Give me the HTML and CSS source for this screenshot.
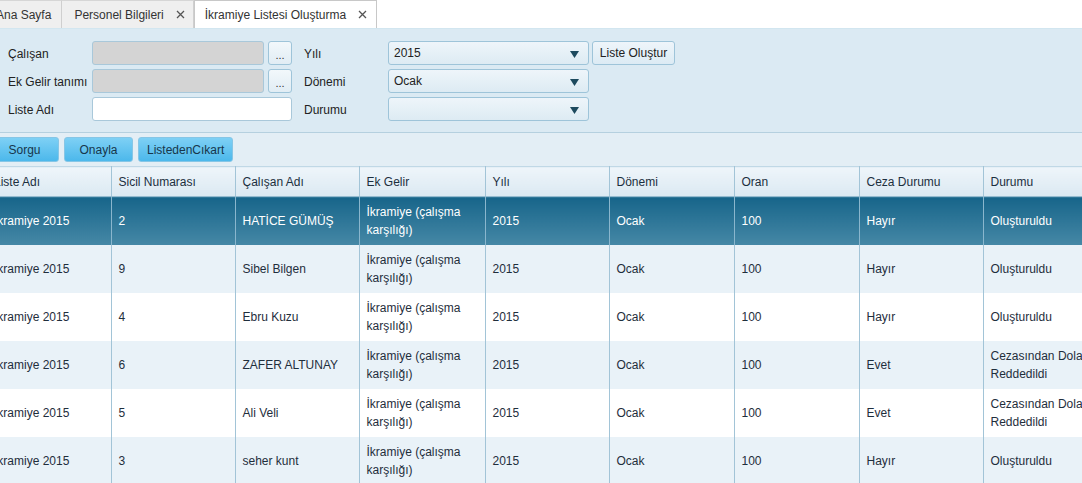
FILE: index.html
```html
<!DOCTYPE html>
<html lang="tr">
<head>
<meta charset="utf-8">
<title>İkramiye Listesi Oluşturma</title>
<link rel="stylesheet" href="styles.css">
</head>
<body>
<div class="app">
  <div class="tabbar">
    <div class="tab tab-first">Ana Sayfa</div>
    <div class="tab">Personel Bilgileri<span class="close"><svg width="9" height="9" viewBox="0 0 9 9"><path d="M1 1L8 8M8 1L1 8" stroke="#555" stroke-width="1.3"/></svg></span></div>
    <div class="tab tab-active">İkramiye Listesi Oluşturma<span class="close"><svg width="9" height="9" viewBox="0 0 9 9"><path d="M1 1L8 8M8 1L1 8" stroke="#555" stroke-width="1.3"/></svg></span></div>
  </div>

  <div class="form">
    <div class="row">
      <label class="lbl">Çalışan</label>
      <div class="inp inp-gray"></div>
      <button class="dots">...</button>
      <label class="lbl lbl2">Yılı</label>
      <div class="sel">2015<span class="arrow"><svg width="9" height="7" viewBox="0 0 9 7"><path d="M0 0H9L4.5 7Z" fill="#1d4a5e"/></svg></span></div>
      <button class="btn-light">Liste Oluştur</button>
    </div>
    <div class="row">
      <label class="lbl">Ek Gelir tanımı</label>
      <div class="inp inp-gray"></div>
      <button class="dots">...</button>
      <label class="lbl lbl2">Dönemi</label>
      <div class="sel">Ocak<span class="arrow"><svg width="9" height="7" viewBox="0 0 9 7"><path d="M0 0H9L4.5 7Z" fill="#1d4a5e"/></svg></span></div>
    </div>
    <div class="row">
      <label class="lbl">Liste Adı</label>
      <div class="inp inp-wide"></div>
      <label class="lbl lbl2">Durumu</label>
      <div class="sel"><span class="arrow"><svg width="9" height="7" viewBox="0 0 9 7"><path d="M0 0H9L4.5 7Z" fill="#1d4a5e"/></svg></span></div>
    </div>
  </div>

  <div class="toolbar">
    <button class="btn-blue">Sorgu</button>
    <button class="btn-blue">Onayla</button>
    <button class="btn-blue">ListedenCıkart</button>
  </div>

  <table class="grid">
    <colgroup>
      <col class="c124"><col class="c124"><col class="c124"><col class="c126"><col class="c124"><col class="c125"><col class="c125"><col class="c124"><col class="c124">
    </colgroup>
    <thead>
      <tr><th>Liste Adı</th><th>Sicil Numarası</th><th>Çalışan Adı</th><th>Ek Gelir</th><th>Yılı</th><th>Dönemi</th><th>Oran</th><th>Ceza Durumu</th><th>Durumu</th></tr>
    </thead>
    <tbody>
      <tr class="selected"><td>İkramiye 2015</td><td>2</td><td>HATİCE GÜMÜŞ</td><td>İkramiye (çalışma karşılığı)</td><td>2015</td><td>Ocak</td><td>100</td><td>Hayır</td><td>Oluşturuldu</td></tr>
      <tr class="alt"><td>İkramiye 2015</td><td>9</td><td>Sibel Bilgen</td><td>İkramiye (çalışma karşılığı)</td><td>2015</td><td>Ocak</td><td>100</td><td>Hayır</td><td>Oluşturuldu</td></tr>
      <tr><td>İkramiye 2015</td><td>4</td><td>Ebru Kuzu</td><td>İkramiye (çalışma karşılığı)</td><td>2015</td><td>Ocak</td><td>100</td><td>Hayır</td><td>Oluşturuldu</td></tr>
      <tr class="alt"><td>İkramiye 2015</td><td>6</td><td>ZAFER ALTUNAY</td><td>İkramiye (çalışma karşılığı)</td><td>2015</td><td>Ocak</td><td>100</td><td>Evet</td><td>Cezasından Dolayı Reddedildi</td></tr>
      <tr><td>İkramiye 2015</td><td>5</td><td>Ali Veli</td><td>İkramiye (çalışma karşılığı)</td><td>2015</td><td>Ocak</td><td>100</td><td>Evet</td><td>Cezasından Dolayı Reddedildi</td></tr>
      <tr class="alt"><td>İkramiye 2015</td><td>3</td><td>seher kunt</td><td>İkramiye (çalışma karşılığı)</td><td>2015</td><td>Ocak</td><td>100</td><td>Hayır</td><td>Oluşturuldu</td></tr>
    </tbody>
  </table>
</div>
</body>
</html>
```

FILE: styles.css
```css
html, body {
  margin: 0;
  padding: 0;
}
body {
  width: 1082px;
  height: 483px;
  overflow: hidden;
  background: #ffffff;
  font-family: "Liberation Sans", Arial, sans-serif;
  font-size: 12px;
  color: #222;
}
.app {
  margin-left: -13px;
  width: 1300px;
}

/* Tabs */
.tabbar {
  display: flex;
  height: 28px;
  background: #ffffff;
}
.tab {
  display: flex;
  align-items: center;
  box-sizing: border-box;
  height: 28px;
  padding: 0 8px 0 12px;
  background: #efefef;
  border-top: 1px solid #d6d6d6;
  border-right: 1px solid #cfcfcf;
  color: #333;
  white-space: nowrap;
}
.tab-first {
  padding: 0 10px 0 9px;
}
.tab-active {
  background: #ffffff;
  border-left: 1px solid #c8c8c8;
  border-right: 1px solid #c8c8c8;
  border-top: 1px solid #c8c8c8;
  padding: 0 9px 0 10px;
}
.close {
  display: flex;
  margin-left: 12px;
}

/* Form */
.form {
  background: #dbeaf3;
  border-top: 1px solid #d2e6f0;
  padding: 12px 0 11px 21px;
}
.row {
  display: flex;
  align-items: center;
  height: 24px;
  margin-bottom: 4px;
}
.row:last-child {
  margin-bottom: 0;
}
.lbl {
  width: 84px;
  color: #222;
  padding-top: 2px;
}
.lbl2 {
  margin-left: 12px;
}
.inp {
  box-sizing: border-box;
  width: 172px;
  height: 24px;
  border: 1px solid #a9c8da;
  border-radius: 3px;
  background: #fff;
}
.inp-gray {
  background: #d4d4d4;
}
.inp-wide {
  width: 200px;
}
.dots {
  box-sizing: border-box;
  width: 24px;
  height: 24px;
  margin-left: 4px;
  padding: 4px 0 0;
  border: 1px solid #9ec4d9;
  border-radius: 3px;
  background: linear-gradient(#f2f8fb, #e1edf4);
  font-family: "Liberation Sans", Arial, sans-serif;
  font-size: 11px;
  color: #333;
  line-height: 1;
}
.sel {
  position: relative;
  box-sizing: border-box;
  width: 201px;
  height: 24px;
  padding-left: 5px;
  display: flex;
  align-items: center;
  border: 1px solid #9ec4d9;
  border-radius: 3px;
  background: linear-gradient(#eef5fa, #ddebf3);
  color: #222;
}
.arrow {
  position: absolute;
  right: 9px;
  top: 9px;
  display: flex;
}
.btn-light {
  box-sizing: border-box;
  height: 24px;
  width: 83px;
  margin-left: 3px;
  padding: 0;
  border: 1px solid #9ec4d9;
  border-radius: 3px;
  background: linear-gradient(#eef5fa, #dcebf4);
  font-family: "Liberation Sans", Arial, sans-serif;
  font-size: 12px;
  color: #222;
}

/* Toolbar */
.toolbar {
  display: flex;
  gap: 5px;
  background: #e3eef5;
  border-top: 1px solid #b5d0df;
  padding: 4px 0 4px 3px;
}
.btn-blue {
  box-sizing: border-box;
  height: 25px;
  min-width: 69px;
  padding: 0 8px;
  border: 1px solid #86c6e6;
  border-radius: 3px;
  background: linear-gradient(#7ed0f5, #4cb8eb);
  font-family: "Liberation Sans", Arial, sans-serif;
  font-size: 12px;
  color: #17364b;
}

/* Table */
.grid {
  border-collapse: collapse;
  table-layout: fixed;
  width: 1120px;
}
.c124 { width: 124px; }
.c125 { width: 125px; }
.c126 { width: 126px; }
.grid th {
  height: 30px;
  box-sizing: border-box;
  padding: 0 0 0 7px;
  text-align: left;
  font-weight: normal;
  color: #1c2f3e;
  background: linear-gradient(#eef5fa, #dbe9f2);
  border-top: 1px solid #c0d8e6;
  border-right: 1px solid #a2c4d7;
  border-bottom: 1px solid #95bbd0;
}
.grid td {
  height: 48px;
  box-sizing: border-box;
  padding: 0 6px 0 7px;
  line-height: 18px;
  color: #1f2e3c;
  border-right: 1px solid #a2c4d7;
  vertical-align: middle;
  background: #ffffff;
}
.grid tr.alt td {
  background: #e9f2f8;
}
.grid tr.selected td {
  color: #ffffff;
  background: linear-gradient(#17658a, #4688a6);
  border-right-color: #8ab6cd;
}
```
